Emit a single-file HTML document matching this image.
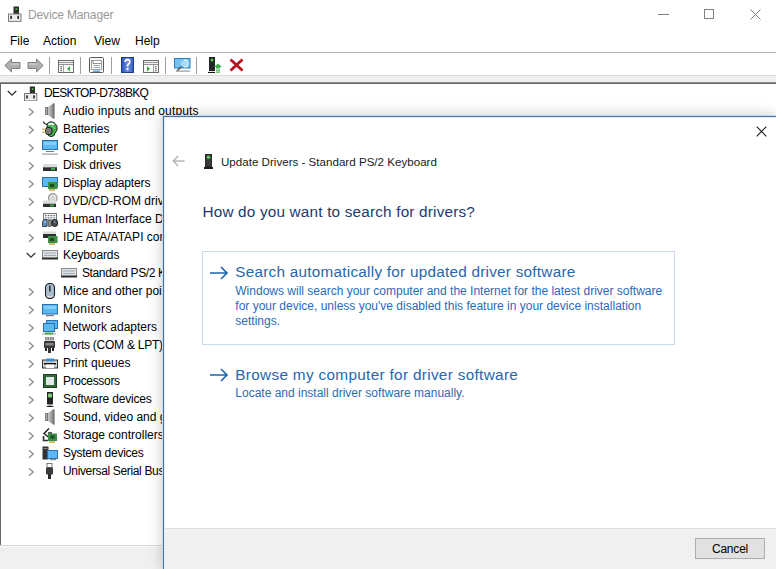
<!DOCTYPE html>
<html><head><meta charset="utf-8">
<style>
html,body{margin:0;padding:0;width:776px;height:569px;overflow:hidden;background:#fff;}
body{position:relative;font-family:"Liberation Sans",sans-serif;font-size:12px;color:#000;}
.a{position:absolute;white-space:nowrap;line-height:12px;}
.ic{position:absolute;}
#title{left:28px;top:9px;color:#999;font-size:12px;letter-spacing:-0.15px;}
.menu{top:35px;}
#menuline{position:absolute;left:0;top:52px;width:776px;height:1px;background:#b4b4b4;}
#tbband{position:absolute;left:0;top:75px;width:776px;height:7px;background:#efefef;border-top:1px solid #d9d9d9;box-sizing:border-box;}
#tbband2{position:absolute;left:0;top:82px;width:776px;height:1px;background:#8e8e8e;}
#darkline{position:absolute;left:0;top:83px;width:776px;height:1px;background:#646464;}
#leftb{position:absolute;left:0;top:83px;width:1px;height:463px;background:#6a6a6a;}
#status{position:absolute;left:0;top:545px;width:776px;height:23px;background:#f0f0f0;border-top:1px solid #d6d6d6;}#status:before{content:"";position:absolute;left:0;top:0;width:100%;height:1px;background:#fbfbfb;}
.tsep{position:absolute;top:57px;width:1px;height:17px;background:#a0a0a0;}
.row{position:absolute;white-space:nowrap;line-height:12px;font-size:12px;}
.chev{position:absolute;}
#dlg{position:absolute;left:163px;top:116px;width:613px;height:453px;background:#fff;border-left:1px solid #4f7096;border-top:1px solid #4f7096;box-sizing:border-box;box-shadow:-1px -1px 0 0 #c3dcf5,0 0 13px 1px rgba(0,0,0,0.2);}
#footer{position:absolute;left:0;top:411px;width:612px;height:42px;background:#f0f0f0;border-top:1px solid #dfdfdf;}
#cancel{position:absolute;left:531px;top:9px;width:70px;height:21px;box-sizing:border-box;background:#e1e1e1;border:1px solid #adadad;text-align:center;line-height:20px;font-size:12px;letter-spacing:-0.2px;}
#optbox{position:absolute;left:38px;top:134px;width:473px;height:94px;box-sizing:border-box;border:1px solid #c9d9e9;}
.big{font-size:15.3px;color:#2866ae;line-height:16px;letter-spacing:0.25px;}
.desc{font-size:12px;color:#2a6bb8;line-height:15px;}
</style></head>
<body>
<!-- title bar -->
<svg class="ic" style="left:8px;top:6px" width="14" height="16" viewBox="0 0 14 16"><rect x="5.5" y="0.5" width="5.5" height="7.5" fill="#2e2e2e"/><rect x="7.6" y="2.3" width="1.6" height="1.6" fill="#5c5"/><rect x="0.5" y="8" width="12.5" height="7.4" fill="#ececec" stroke="#7a7a7a"/><rect x="2.3" y="9.8" width="1.6" height="3.2" fill="#222"/><rect x="9.4" y="9.8" width="1.6" height="3.2" fill="#222"/></svg>
<div class="a" id="title">Device Manager</div>
<div class="ic" style="left:658px;top:14px;width:11px;height:1px;background:#808080"></div>
<div class="ic" style="left:704px;top:9px;width:8px;height:8px;border:1px solid #808080"></div>
<svg class="ic" style="left:750px;top:9px" width="11" height="11" viewBox="0 0 11 11"><path d="M0.5 0.5L10.5 10.5M10.5 0.5L0.5 10.5" stroke="#808080" stroke-width="1"/></svg>

<!-- menu -->
<div class="a menu" style="left:10px">File</div>
<div class="a menu" style="left:43px">Action</div>
<div class="a menu" style="left:94px">View</div>
<div class="a menu" style="left:135px">Help</div>
<div id="menuline"></div>

<!-- toolbar -->
<svg class="ic" style="left:4px;top:58px" width="17" height="15" viewBox="0 0 17 15"><path d="M0.8 7.5L7.5 1V4.5H16V10.5H7.5V14Z" fill="#b0b0b0" stroke="#808080" stroke-width="1"/><path d="M7.5 6H15" stroke="#d8d8d8" stroke-width="1"/></svg>
<svg class="ic" style="left:27px;top:58px" width="17" height="15" viewBox="0 0 17 15"><path d="M16.2 7.5L9.5 1V4.5H1V10.5H9.5V14Z" fill="#b0b0b0" stroke="#808080" stroke-width="1"/><path d="M2 6H9.5" stroke="#d8d8d8" stroke-width="1"/></svg>
<div class="tsep" style="left:49px"></div>
<svg class="ic" style="left:58px;top:60px" width="16" height="13" viewBox="0 0 16 13"><rect x="0.5" y="0.5" width="15" height="12" fill="#fafafa" stroke="#6a6a6a"/><path d="M1 2.5H15" stroke="#9a9a9a" stroke-width="1.2"/><path d="M1 4.5H15" stroke="#7a7a7a" stroke-width="0.8"/><path d="M5.5 5V12.5" stroke="#8a8a8a" stroke-width="0.8"/><path d="M2.3 6.8H4M2.3 8.8H4M2.3 10.8H4" stroke="#555" stroke-width="1.1"/><path d="M9 8.7L12 6V11.4Z" fill="#3ea447"/></svg>
<div class="tsep" style="left:80px"></div>
<svg class="ic" style="left:89px;top:57px" width="15" height="16" viewBox="0 0 15 16"><rect x="0.5" y="0.5" width="14" height="15" rx="1" fill="#f6f6f6" stroke="#5a5a5a"/><rect x="2.5" y="3.5" width="10" height="9" fill="#fff" stroke="#8a8a8a" stroke-width="0.8"/><path d="M4 3.5V6.5H12.5" stroke="#777" stroke-width="0.8" fill="none"/><path d="M4.5 8.5H11M4.5 10.5H11" stroke="#8a9ab0" stroke-width="0.9"/><rect x="4" y="13.5" width="7" height="1.5" fill="#59a8e8"/></svg>
<div class="tsep" style="left:111px"></div>
<svg class="ic" style="left:121px;top:57px" width="13" height="16" viewBox="0 0 13 16"><defs><linearGradient id="hg" x1="0" x2="1"><stop offset="0" stop-color="#2b55b8"/><stop offset="0.5" stop-color="#6f8fe0"/><stop offset="1" stop-color="#3a60c0"/></linearGradient></defs><rect x="0" y="0" width="13" height="16" fill="#1c3f8c"/><rect x="1" y="1" width="11" height="14" fill="url(#hg)"/><path d="M4.2 5Q4.2 2.6 6.5 2.6Q8.8 2.6 8.8 4.8Q8.8 6.3 7.3 7.2Q6.5 7.8 6.5 9.6" stroke="#fff" stroke-width="1.7" fill="none"/><rect x="5.5" y="11" width="2" height="2" fill="#fff"/></svg>
<svg class="ic" style="left:143px;top:60px" width="16" height="13" viewBox="0 0 16 13"><rect x="0.5" y="0.5" width="15" height="12" fill="#fafafa" stroke="#6a6a6a"/><path d="M1 2.5H15" stroke="#9a9a9a" stroke-width="1.2"/><path d="M1 4.5H15" stroke="#7a7a7a" stroke-width="0.8"/><path d="M10.5 5V12.5" stroke="#8a8a8a" stroke-width="0.8"/><path d="M12 6.8H13.7M12 8.8H13.7M12 10.8H13.7" stroke="#555" stroke-width="1.1"/><path d="M7 8.7L4 6V11.4Z" fill="#3ea447"/></svg>
<div class="tsep" style="left:165px"></div>
<svg class="ic" style="left:174px;top:58px" width="17" height="15" viewBox="0 0 17 15"><rect x="0.5" y="0.5" width="15.5" height="9.5" fill="#74c3f3" stroke="#2f7dbd"/><path d="M10 2Q14 2 14 5.5Q14 9 10 9" stroke="#d6effd" stroke-width="1.4" fill="none"/><circle cx="10" cy="5.5" r="3" fill="#a9dcfa"/><path d="M7.5 8.5L3 13" stroke="#555" stroke-width="1.5"/><rect x="2" y="12.5" width="14" height="1.2" fill="#9a9a9a"/></svg>
<div class="tsep" style="left:196px"></div>
<svg class="ic" style="left:208px;top:57px" width="14" height="16" viewBox="0 0 14 16"><rect x="1" y="0" width="6" height="14" fill="#262626"/><circle cx="4" cy="3" r="1.5" fill="#5c5"/><path d="M0 15.5H7" stroke="#111" stroke-width="1.2"/><path d="M6 10L10 6.5L14 10Z" fill="#3fb24a"/><rect x="8" y="10" width="4" height="1.5" fill="#3fb24a"/><rect x="8" y="12.5" width="4" height="1.2" fill="#3fb24a"/><rect x="8" y="14.5" width="4" height="1.2" fill="#3fb24a"/></svg>
<svg class="ic" style="left:229px;top:58px" width="15" height="14" viewBox="0 0 15 14"><path d="M1.5 1.5L13.5 12.5M13.5 1.5L1.5 12.5" stroke="#b8101e" stroke-width="2.8"/></svg>

<div id="tbband"></div><div id="tbband2"></div><div id="darkline"></div>

<!-- tree -->
<svg class="ic" style="left:7px;top:90px" width="10" height="7" viewBox="0 0 10 7"><path d="M0.8 1L5 5.2L9.2 1" stroke="#333" stroke-width="1.3" fill="none"/></svg>
<svg class="ic" style="left:24px;top:86px" width="14" height="15" viewBox="0 0 14 15"><rect x="5.8" y="0.5" width="5.2" height="7" fill="#2e2e2e"/><rect x="7.8" y="2.3" width="1.6" height="1.6" fill="#5c5"/><rect x="0.5" y="7.5" width="12.3" height="7.4" fill="#ececec" stroke="#7a7a7a"/><rect x="2.2" y="9.3" width="1.6" height="3.2" fill="#222"/><rect x="9.2" y="9.3" width="1.6" height="3.2" fill="#222"/></svg>
<div class="row" style="left:44px;top:87px;letter-spacing:-0.74px">DESKTOP-D738BKQ</div>
<svg class="ic" style="left:28px;top:107px" width="7" height="10" viewBox="0 0 7 10"><path d="M1 1.2L5.2 5L1 8.8" stroke="#8c8c8c" stroke-width="1.3" fill="none"/></svg>
<svg class="ic" style="left:42px;top:103px" width="16" height="16" viewBox="0 0 16 16"><defs><linearGradient id="spg" x1="0" x2="1"><stop offset="0" stop-color="#c8c8c8"/><stop offset="0.6" stop-color="#9a9a9a"/><stop offset="1" stop-color="#5a5a5a"/></linearGradient></defs><rect x="3" y="4" width="3" height="8" fill="#6a6a6a"/><rect x="3.6" y="4.5" width="1.6" height="7" fill="#a8a8a8"/><path d="M6 4L11.5 0.3H12.5V15.7H11.5L6 12Z" fill="url(#spg)"/></svg>
<div class="row" style="left:63px;top:105px;letter-spacing:0.15px">Audio inputs and outputs</div>
<svg class="ic" style="left:28px;top:125px" width="7" height="10" viewBox="0 0 7 10"><path d="M1 1.2L5.2 5L1 8.8" stroke="#8c8c8c" stroke-width="1.3" fill="none"/></svg>
<svg class="ic" style="left:42px;top:121px" width="16" height="16" viewBox="0 0 16 16"><path d="M1.3 0.5Q2 3 5 3.5" stroke="#2a2a2a" stroke-width="1.1" fill="none"/><path d="M5 3Q6 1 9 0.8Q12.5 1 13.5 3Q15.5 5 15.2 8Q14.5 11 13 12Q13 15 10 15.5Q7 16 5.5 13.5Q5 8 5 3Z" fill="#3faa48" stroke="#1a1a1a" stroke-width="0.9"/><path d="M6 3Q9 0.5 12.5 3L12 4.5Q9 3 6.5 4.5Z" fill="#f4f4f4"/><path d="M9 5Q12 5 13 8" stroke="#8fdc8f" stroke-width="1" fill="none"/><rect x="3.5" y="6.5" width="6.5" height="7" rx="2.5" fill="#7a7a7a" stroke="#111" stroke-width="0.9"/><rect x="0" y="7.5" width="3.5" height="1.5" fill="#d8c470"/><rect x="0" y="10.5" width="3.5" height="1.5" fill="#d8c470"/></svg>
<div class="row" style="left:63px;top:123px;letter-spacing:-0.12px">Batteries</div>
<svg class="ic" style="left:28px;top:143px" width="7" height="10" viewBox="0 0 7 10"><path d="M1 1.2L5.2 5L1 8.8" stroke="#8c8c8c" stroke-width="1.3" fill="none"/></svg>
<svg class="ic" style="left:42px;top:139px" width="16" height="16" viewBox="0 0 16 16"><rect x="0.5" y="1.5" width="15" height="9" fill="#5cb8f2" stroke="#2b6fad"/><rect x="2" y="3" width="12" height="3" fill="#86cdf7"/><rect x="4" y="12" width="8" height="1" fill="#7a7a7a"/><rect x="0" y="14.5" width="16" height="1.2" fill="#a0a0a0"/></svg>
<div class="row" style="left:63px;top:141px;letter-spacing:0.25px">Computer</div>
<svg class="ic" style="left:28px;top:161px" width="7" height="10" viewBox="0 0 7 10"><path d="M1 1.2L5.2 5L1 8.8" stroke="#8c8c8c" stroke-width="1.3" fill="none"/></svg>
<svg class="ic" style="left:42px;top:157px" width="16" height="16" viewBox="0 0 16 16"><rect x="1" y="7" width="14" height="3.5" fill="#dcdcdc"/><rect x="1" y="10.3" width="14" height="3.7" fill="#2e2e2e"/><rect x="9" y="11" width="4" height="2" fill="#3fae4a"/></svg>
<div class="row" style="left:63px;top:159px;letter-spacing:-0.07px">Disk drives</div>
<svg class="ic" style="left:28px;top:179px" width="7" height="10" viewBox="0 0 7 10"><path d="M1 1.2L5.2 5L1 8.8" stroke="#8c8c8c" stroke-width="1.3" fill="none"/></svg>
<svg class="ic" style="left:42px;top:175px" width="16" height="16" viewBox="0 0 16 16"><rect x="0.5" y="2.5" width="15" height="9" fill="#5cb8f2" stroke="#2b6fad"/><rect x="6" y="7" width="9.5" height="7" fill="#3d8f45"/><rect x="8" y="9" width="4" height="3" fill="#1e4a22"/><rect x="7" y="14" width="6" height="2" fill="#d4bf6a"/></svg>
<div class="row" style="left:63px;top:177px;letter-spacing:-0.13px">Display adapters</div>
<svg class="ic" style="left:28px;top:197px" width="7" height="10" viewBox="0 0 7 10"><path d="M1 1.2L5.2 5L1 8.8" stroke="#8c8c8c" stroke-width="1.3" fill="none"/></svg>
<svg class="ic" style="left:42px;top:193px" width="16" height="16" viewBox="0 0 16 16"><circle cx="10.8" cy="5" r="4.3" fill="#e4e4e4" stroke="#9a9a9a" stroke-width="1.2"/><circle cx="10.8" cy="5" r="1.3" fill="#fff" stroke="#aaa" stroke-width="0.7"/><rect x="1" y="7.5" width="13" height="3.5" fill="#dcdcdc"/><rect x="1" y="10.8" width="13" height="3.2" fill="#2e2e2e"/><rect x="8" y="11.5" width="4" height="1.8" fill="#3fae4a"/></svg>
<div class="row" style="left:63px;top:195px">DVD/CD-ROM drives</div>
<svg class="ic" style="left:28px;top:215px" width="7" height="10" viewBox="0 0 7 10"><path d="M1 1.2L5.2 5L1 8.8" stroke="#8c8c8c" stroke-width="1.3" fill="none"/></svg>
<svg class="ic" style="left:42px;top:211px" width="16" height="16" viewBox="0 0 16 16"><rect x="1.5" y="2.5" width="13" height="6.5" fill="#f2f4f6" stroke="#7a7a7a"/><path d="M3 4.6H4.5M5.8 4.6H7.3M8.6 4.6H10.1M11.4 4.6H12.9M3 6.8H4.5M5.8 6.8H7.3M8.6 6.8H10.1M11.4 6.8H12.9" stroke="#555" stroke-width="1"/><path d="M0.5 15.5V11Q1 8.5 3 8.5H5V15.5Z" fill="#5a8fc8" stroke="#3a3a3a" stroke-width="0.9"/><path d="M2 11H4.5" stroke="#d8e8f8" stroke-width="0.8"/><rect x="6" y="9" width="3.5" height="6.5" rx="1.2" fill="#8a8a8a" stroke="#444" stroke-width="0.8"/><rect x="10" y="8.5" width="5.5" height="7" rx="2.5" fill="#4a4f5a" stroke="#151515" stroke-width="0.9"/><path d="M12.7 9.5V12" stroke="#aab" stroke-width="0.8"/></svg>
<div class="row" style="left:63px;top:213px">Human Interface Devices</div>
<svg class="ic" style="left:28px;top:233px" width="7" height="10" viewBox="0 0 7 10"><path d="M1 1.2L5.2 5L1 8.8" stroke="#8c8c8c" stroke-width="1.3" fill="none"/></svg>
<svg class="ic" style="left:42px;top:229px" width="16" height="16" viewBox="0 0 16 16"><rect x="1" y="2.5" width="13" height="2.5" fill="#dcdcdc"/><rect x="1" y="5" width="13" height="4" fill="#2e2e2e"/><rect x="6" y="7" width="9.5" height="7" fill="#3d8f45"/><rect x="8" y="9" width="4" height="3" fill="#1e4a22"/><rect x="7" y="14" width="6" height="2" fill="#d4bf6a"/></svg>
<div class="row" style="left:63px;top:231px">IDE ATA/ATAPI controllers</div>
<svg class="ic" style="left:26px;top:252px" width="10" height="7" viewBox="0 0 10 7"><path d="M0.8 1L5 5.2L9.2 1" stroke="#333" stroke-width="1.3" fill="none"/></svg>
<svg class="ic" style="left:42px;top:247px" width="16" height="16" viewBox="0 0 16 16"><rect x="0.5" y="3.5" width="15" height="8" fill="#dfe4ea" stroke="#8a8a8a"/><path d="M2 6H14M2 8.5H14" stroke="#9aa0a8" stroke-width="0.9"/><rect x="0" y="10.5" width="16" height="2" fill="#2a2a2a"/></svg>
<div class="row" style="left:63px;top:249px;letter-spacing:-0.12px">Keyboards</div>
<svg class="ic" style="left:61px;top:265px" width="16" height="16" viewBox="0 0 16 16"><rect x="0.5" y="3.5" width="15" height="8" fill="#dfe4ea" stroke="#8a8a8a"/><path d="M2 6H14M2 8.5H14" stroke="#9aa0a8" stroke-width="0.9"/><rect x="0" y="10.5" width="16" height="2" fill="#2a2a2a"/></svg>
<div class="row" style="left:82px;top:267px;letter-spacing:-0.38px">Standard PS/2 Keyboard</div>
<svg class="ic" style="left:28px;top:287px" width="7" height="10" viewBox="0 0 7 10"><path d="M1 1.2L5.2 5L1 8.8" stroke="#8c8c8c" stroke-width="1.3" fill="none"/></svg>
<svg class="ic" style="left:42px;top:283px" width="16" height="16" viewBox="0 0 16 16"><rect x="3.5" y="0.5" width="9" height="15" rx="4" fill="#a9bccf" stroke="#1a1a1a" stroke-width="1.1"/><rect x="7" y="2.5" width="1.6" height="6" fill="#333"/><path d="M5 13Q8 15 11 13" stroke="#eee" fill="none"/></svg>
<div class="row" style="left:63px;top:285px">Mice and other pointing devices</div>
<svg class="ic" style="left:28px;top:305px" width="7" height="10" viewBox="0 0 7 10"><path d="M1 1.2L5.2 5L1 8.8" stroke="#8c8c8c" stroke-width="1.3" fill="none"/></svg>
<svg class="ic" style="left:42px;top:301px" width="16" height="16" viewBox="0 0 16 16"><rect x="0.5" y="3.5" width="15" height="9.5" fill="#5cb8f2" stroke="#2b6fad"/><rect x="2" y="5" width="12" height="3" fill="#86cdf7"/><rect x="4" y="14" width="8" height="1.2" fill="#7a7a7a"/></svg>
<div class="row" style="left:63px;top:303px;letter-spacing:0.35px">Monitors</div>
<svg class="ic" style="left:28px;top:323px" width="7" height="10" viewBox="0 0 7 10"><path d="M1 1.2L5.2 5L1 8.8" stroke="#8c8c8c" stroke-width="1.3" fill="none"/></svg>
<svg class="ic" style="left:42px;top:319px" width="16" height="16" viewBox="0 0 16 16"><rect x="4.5" y="1.5" width="11" height="8" fill="#5cb8f2" stroke="#2b6fad"/><rect x="1.5" y="4.5" width="11" height="8" fill="#5cb8f2" stroke="#2b6fad"/><rect x="0" y="13.5" width="14" height="2.5" fill="#cfcfcf"/><rect x="3" y="13.5" width="8" height="2" fill="#4cb050"/></svg>
<div class="row" style="left:63px;top:321px">Network adapters</div>
<svg class="ic" style="left:28px;top:341px" width="7" height="10" viewBox="0 0 7 10"><path d="M1 1.2L5.2 5L1 8.8" stroke="#8c8c8c" stroke-width="1.3" fill="none"/></svg>
<svg class="ic" style="left:42px;top:337px" width="16" height="16" viewBox="0 0 16 16"><rect x="3" y="0" width="9" height="3.5" fill="#8a8a8a"/><path d="M5 0V3.5M7.5 0V3.5M10 0V3.5" stroke="#eee" stroke-width="0.6"/><rect x="2" y="4" width="11" height="7" rx="1" fill="#3a3a3a"/><rect x="3.5" y="6" width="8" height="2.5" fill="#888"/><rect x="3" y="11" width="2" height="3" fill="#222"/><rect x="10" y="11" width="2" height="3" fill="#222"/><rect x="6" y="11" width="3" height="5" fill="#333"/></svg>
<div class="row" style="left:63px;top:339px;letter-spacing:-0.25px">Ports (COM &amp; LPT)</div>
<svg class="ic" style="left:28px;top:359px" width="7" height="10" viewBox="0 0 7 10"><path d="M1 1.2L5.2 5L1 8.8" stroke="#8c8c8c" stroke-width="1.3" fill="none"/></svg>
<svg class="ic" style="left:42px;top:355px" width="16" height="16" viewBox="0 0 16 16"><rect x="0.5" y="5" width="15" height="8" fill="#cfcfcf" stroke="#333"/><path d="M4 6Q8 2 12 6Z" fill="#2e7fc4"/><rect x="4" y="3.5" width="8" height="3" fill="#3a8fd0"/><rect x="2" y="8" width="12" height="1.5" fill="#111"/><rect x="4" y="9.5" width="8" height="3.5" fill="#fff"/></svg>
<div class="row" style="left:63px;top:357px">Print queues</div>
<svg class="ic" style="left:28px;top:377px" width="7" height="10" viewBox="0 0 7 10"><path d="M1 1.2L5.2 5L1 8.8" stroke="#8c8c8c" stroke-width="1.3" fill="none"/></svg>
<svg class="ic" style="left:42px;top:373px" width="16" height="16" viewBox="0 0 16 16"><rect x="1.5" y="1.5" width="13" height="13" fill="#2f6a38" stroke="#1e3d22"/><rect x="4" y="4" width="8" height="8" fill="#e4e8ea"/></svg>
<div class="row" style="left:63px;top:375px;letter-spacing:-0.33px">Processors</div>
<svg class="ic" style="left:28px;top:395px" width="7" height="10" viewBox="0 0 7 10"><path d="M1 1.2L5.2 5L1 8.8" stroke="#8c8c8c" stroke-width="1.3" fill="none"/></svg>
<svg class="ic" style="left:42px;top:391px" width="16" height="16" viewBox="0 0 16 16"><rect x="5" y="1" width="6" height="12.5" fill="#242424"/><circle cx="8" cy="4.5" r="2.2" fill="#7fd07f"/><path d="M3.5 16Q8 13 12.5 16Z" fill="#111"/></svg>
<div class="row" style="left:63px;top:393px;letter-spacing:-0.17px">Software devices</div>
<svg class="ic" style="left:28px;top:413px" width="7" height="10" viewBox="0 0 7 10"><path d="M1 1.2L5.2 5L1 8.8" stroke="#8c8c8c" stroke-width="1.3" fill="none"/></svg>
<svg class="ic" style="left:42px;top:409px" width="16" height="16" viewBox="0 0 16 16"><defs><linearGradient id="spg" x1="0" x2="1"><stop offset="0" stop-color="#c8c8c8"/><stop offset="0.6" stop-color="#9a9a9a"/><stop offset="1" stop-color="#5a5a5a"/></linearGradient></defs><rect x="3" y="4" width="3" height="8" fill="#6a6a6a"/><rect x="3.6" y="4.5" width="1.6" height="7" fill="#a8a8a8"/><path d="M6 4L11.5 0.3H12.5V15.7H11.5L6 12Z" fill="url(#spg)"/></svg>
<div class="row" style="left:63px;top:411px">Sound, video and game controllers</div>
<svg class="ic" style="left:28px;top:431px" width="7" height="10" viewBox="0 0 7 10"><path d="M1 1.2L5.2 5L1 8.8" stroke="#8c8c8c" stroke-width="1.3" fill="none"/></svg>
<svg class="ic" style="left:42px;top:427px" width="16" height="16" viewBox="0 0 16 16"><path d="M7 1.5L2 6.5L7 10.5M6 6H10" stroke="#222" stroke-width="1.4" fill="none"/><path d="M1.5 9L1.5 13.5H6" stroke="#333" stroke-width="1.6" fill="none"/><rect x="6" y="6.5" width="9" height="7.5" fill="#3d8f45"/><rect x="8.5" y="8.5" width="4" height="3" fill="#1e4a22"/><rect x="7" y="14" width="6" height="2" fill="#d4bf6a"/></svg>
<div class="row" style="left:63px;top:429px">Storage controllers</div>
<svg class="ic" style="left:28px;top:449px" width="7" height="10" viewBox="0 0 7 10"><path d="M1 1.2L5.2 5L1 8.8" stroke="#8c8c8c" stroke-width="1.3" fill="none"/></svg>
<svg class="ic" style="left:42px;top:445px" width="16" height="16" viewBox="0 0 16 16"><rect x="0.5" y="1.5" width="6" height="13" fill="#333"/><rect x="1.5" y="3" width="4" height="1" fill="#888"/><rect x="5.5" y="5.5" width="10" height="8" fill="#5cb8f2" stroke="#2b6fad"/><rect x="8" y="14.2" width="6" height="1" fill="#777"/></svg>
<div class="row" style="left:63px;top:447px;letter-spacing:-0.25px">System devices</div>
<svg class="ic" style="left:28px;top:467px" width="7" height="10" viewBox="0 0 7 10"><path d="M1 1.2L5.2 5L1 8.8" stroke="#8c8c8c" stroke-width="1.3" fill="none"/></svg>
<svg class="ic" style="left:42px;top:463px" width="16" height="16" viewBox="0 0 16 16"><rect x="5" y="0.5" width="5" height="4" fill="#fff" stroke="#777"/><rect x="4" y="4.5" width="7" height="7" rx="1" fill="#3a3a3a"/><rect x="6" y="11" width="3" height="5" fill="#2a2a2a"/></svg>
<div class="row" style="left:63px;top:465px;letter-spacing:-0.35px">Universal Serial Bus controllers</div>
<div id="leftb"></div>
<div id="status"></div>

<!-- dialog -->
<div id="dlg">
  <svg class="ic" style="left:592px;top:9px" width="11" height="11" viewBox="0 0 11 11"><path d="M0.7 0.7L10.3 10.3M10.3 0.7L0.7 10.3" stroke="#1a1a1a" stroke-width="1.1"/></svg>
  <svg class="ic" style="left:8px;top:38px" width="13" height="12" viewBox="0 0 13 12"><path d="M12.5 6H1.2M6.2 1L1.2 6L6.2 11" stroke="#b5b5b5" stroke-width="1.4" fill="none"/></svg>
  <svg class="ic" style="left:40px;top:37px" width="9" height="15" viewBox="0 0 9 15"><rect x="1" y="0" width="7" height="13" fill="#2a2a2a"/><rect x="2" y="1" width="5" height="11" fill="#3a3a3a"/><circle cx="4.5" cy="3.2" r="1.8" fill="#5fc75f"/><rect x="0" y="13" width="9" height="2" fill="#1a1a1a"/></svg>
  <div class="a" style="left:57px;top:39px;font-size:11.6px;color:#1a1a1a">Update Drivers - Standard PS/2 Keyboard</div>
  <div class="a" style="left:38.5px;top:86.7px;font-size:15.3px;line-height:16px;letter-spacing:0.19px;color:#1b3a70">How do you want to search for drivers?</div>
  <div id="optbox"></div>
  <svg class="ic" style="left:46px;top:149px" width="19" height="14" viewBox="0 0 19 14"><path d="M0 7H17M11 1L17 7L11 13" stroke="#1c63b0" stroke-width="1.6" fill="none"/></svg>
  <div class="a big" style="left:71.3px;top:147.3px">Search automatically for updated driver software</div>
  <div class="a desc" style="left:71.3px;top:167px">Windows will search your computer and the Internet for the latest driver software</div>
  <div class="a desc" style="left:71.3px;top:182px">for your device, unless you've disabled this feature in your device installation</div>
  <div class="a desc" style="left:71.3px;top:197px">settings.</div>
  <svg class="ic" style="left:46px;top:251px" width="19" height="14" viewBox="0 0 19 14"><path d="M0 7H17M11 1L17 7L11 13" stroke="#1c63b0" stroke-width="1.6" fill="none"/></svg>
  <div class="a big" style="left:71.3px;top:249.7px;letter-spacing:0.33px">Browse my computer for driver software</div>
  <div class="a desc" style="left:71.3px;top:269px">Locate and install driver software manually.</div>
  <div id="footer"><div id="cancel">Cancel</div></div>
  <div style="position:absolute;left:0;top:0;width:1px;height:452px;background:#e2f0fa"></div>
  <div style="position:absolute;left:0;top:0;width:612px;height:1px;background:#e2f0fa"></div>
</div>
</body></html>
